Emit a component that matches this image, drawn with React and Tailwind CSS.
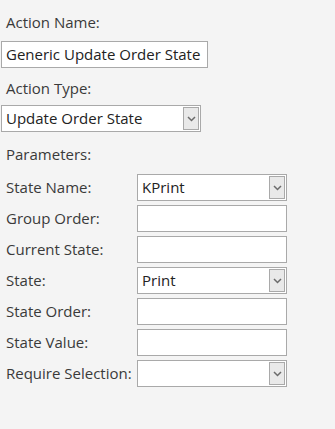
import React from "react";

const Chevron = () => (
  <svg width="9" height="6" viewBox="0 0 9 6" className="block">
    <path d="M1 1 L4.5 4.5 L8 1" fill="none" stroke="#6b6b6b" strokeWidth="1.5" />
  </svg>
);

const SelectBox = ({ value, className }) => (
  <div className={`relative h-[27px] border border-[#a9a9a9] bg-white ${className}`}>
    <span className="block pl-[4px] leading-[25px] text-[#222]">{value}</span>
    <div className="absolute right-[1px] top-[1px] bottom-[1px] w-[16px] border border-[#a9a9a9] bg-[#e9e9e9] flex items-center justify-center">
      <Chevron />
    </div>
  </div>
);

const TextBox = ({ value, className }) => (
  <div className={`h-[27px] border border-[#a9a9a9] bg-white ${className}`}>
    <span className="block pl-[4px] leading-[25px] text-[#222]">{value}</span>
  </div>
);

const params = [
  { label: "State Name:", type: "select", value: "KPrint" },
  { label: "Group Order:", type: "text" },
  { label: "Current State:", type: "text" },
  { label: "State:", type: "select", value: "Print" },
  { label: "State Order:", type: "text" },
  { label: "State Value:", type: "text" },
  { label: "Require Selection:", type: "select" },
];

export default function App() {
  return (
    <div
      className="w-[335px] h-[429px] bg-[#f4f4f4] text-[15px] text-[#3a3a3a] pt-[12px]"
      style={{ fontFamily: '"Open Sans", "Noto Sans", sans-serif' }}
    >
      <div className="pl-[6px] leading-[20px]">Action Name:</div>
      <TextBox value="Generic Update Order State" className="mt-[9px] ml-[1px] w-[207px]" />

      <div className="pl-[6px] leading-[20px] mt-[10px]">Action Type:</div>
      <SelectBox value="Update Order State" className="mt-[7px] ml-[1px] w-[200px]" />

      <div className="pl-[6px] leading-[20px] mt-[12px]">Parameters:</div>

      <div className="mt-[10px] flex flex-col gap-[4px]">
        {params.map((p) => (
          <div key={p.label} className="flex items-center">
            <div className="w-[137px] pl-[6px]">{p.label}</div>
            {p.type === "select" ? (
              <SelectBox value={p.value} className="w-[150px]" />
            ) : (
              <TextBox className="w-[150px]" />
            )}
          </div>
        ))}
      </div>
    </div>
  );
}
